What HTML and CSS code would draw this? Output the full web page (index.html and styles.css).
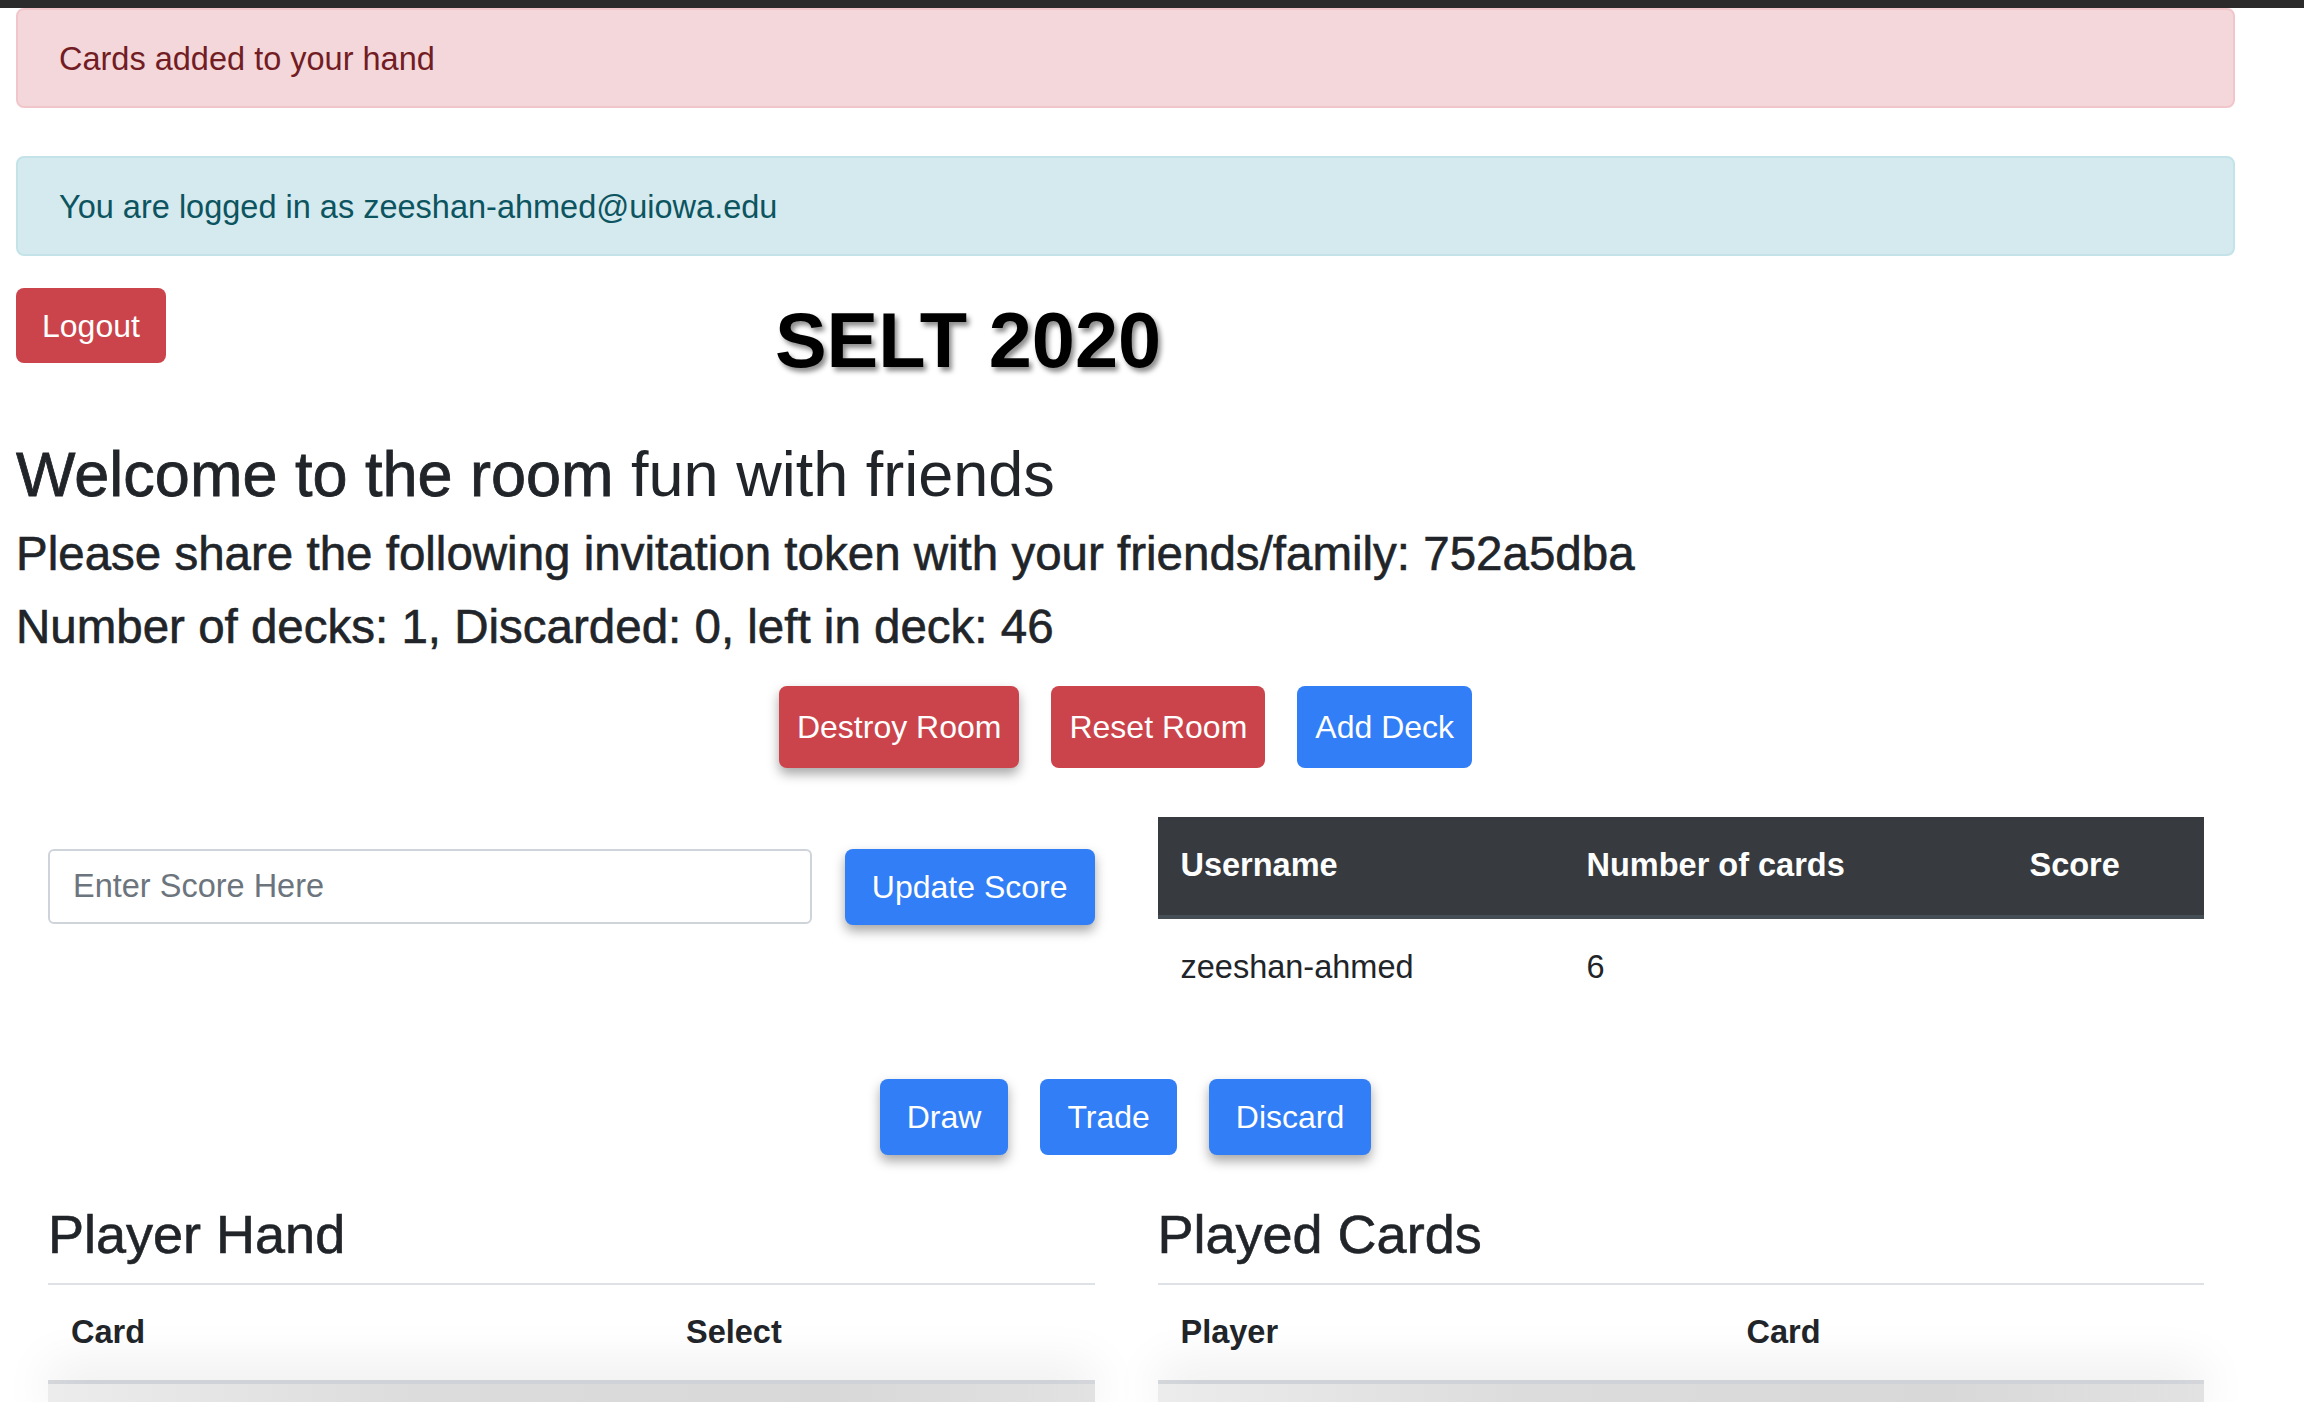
FILE: index.html
```html
<!DOCTYPE html>
<html lang="en">
<head>
<meta charset="utf-8">
<title>SELT 2020 - Room</title>
<link rel="stylesheet" href="styles.css">
</head>
<body>
<div class="topbar"></div>
<div class="page">
  <div class="alert alert-danger">Cards added to your hand</div>
  <div class="alert alert-info">You are logged in as zeeshan-ahmed@uiowa.edu</div>

  <header class="title-row">
    <a class="btn btn-danger btn-logout" href="#">Logout</a>
    <h1 class="site-title">SELT 2020</h1>
  </header>

  <h2 class="room-title"><span class="medium">Welcome to the room</span> fun with friends</h2>
  <h4 class="info-line">Please share the following invitation token with your friends/family: 752a5dba</h4>
  <h4 class="info-line">Number of decks: 1, Discarded: 0, left in deck: 46</h4>

  <div class="btn-row room-actions">
    <button class="btn btn-danger btn-room raised">Destroy Room</button>
    <button class="btn btn-danger btn-room">Reset Room</button>
    <button class="btn btn-primary btn-room">Add Deck</button>
  </div>

  <div class="two-col score-section">
    <div class="col">
      <form class="score-form">
        <input class="score-input" type="text" placeholder="Enter Score Here">
        <button class="btn btn-primary btn-game raised" type="button">Update Score</button>
      </form>
    </div>
    <div class="col">
      <table class="table table-dark players">
        <colgroup><col class="c-user"><col class="c-num"><col></colgroup>
        <thead>
          <tr><th>Username</th><th>Number of cards</th><th>Score</th></tr>
        </thead>
        <tbody>
          <tr><td>zeeshan-ahmed</td><td>6</td><td></td></tr>
        </tbody>
      </table>
    </div>
  </div>

  <div class="btn-row game-actions">
    <button class="btn btn-primary btn-game raised">Draw</button>
    <button class="btn btn-primary btn-game">Trade</button>
    <button class="btn btn-primary btn-game raised">Discard</button>
  </div>

  <div class="two-col cards-section">
    <div class="col">
      <h3 class="section-title">Player Hand</h3>
      <hr class="rule">
      <table class="table cards">
        <colgroup><col class="c-card"><col></colgroup>
        <thead><tr><th>Card</th><th>Select</th></tr></thead>
      </table>
      <div class="table-fade"></div>
    </div>
    <div class="col">
      <h3 class="section-title">Played Cards</h3>
      <hr class="rule">
      <table class="table cards">
        <colgroup><col class="c-player"><col></colgroup>
        <thead><tr><th>Player</th><th>Card</th></tr></thead>
      </table>
      <div class="table-fade"></div>
    </div>
  </div>
</div>
</body>
</html>
```

FILE: styles.css
```css
html {
  overflow: hidden;
}

body {
  margin: 0;
  font-family: "Liberation Sans", Arial, sans-serif;
  font-size: 32.5px;
  line-height: 1.5;
  color: #212529;
  background: #fff;
}

.topbar {
  height: 8px;
  background: #2b2b2b;
}

.page {
  width: 2219px;
  margin-left: 16px;
}

/* Alerts */
.alert {
  border: 2px solid transparent;
  border-radius: 8px;
  padding: 25px 41px 23px;
  line-height: 48px;
}

.alert-danger {
  background: #f4d7da;
  border-color: #f1c6cb;
  color: #721c24;
  margin-bottom: 48px;
}

.alert-info {
  background: #d4eaef;
  border-color: #c3e3e9;
  color: #0c5460;
  margin-bottom: 32px;
}

/* Buttons */
.btn {
  display: inline-flex;
  align-items: center;
  justify-content: center;
  box-sizing: border-box;
  font-family: inherit;
  font-size: 32px;
  line-height: 1;
  color: #fff;
  border: 0;
  border-radius: 8px;
  text-decoration: none;
  cursor: pointer;
}

.btn-danger {
  background: #cb444b;
}

.btn-primary {
  background: #317ef6;
}

.raised {
  box-shadow: 0 6px 12px rgba(0, 0, 0, 0.35);
}

.btn-logout {
  height: 75px;
  padding: 0 26px;
}

.btn-room {
  height: 82px;
  padding: 0 18px;
}

.btn-game {
  height: 76px;
  padding: 0 27px;
}

/* Title row */
.title-row {
  display: flex;
  align-items: flex-start;
  margin-bottom: 50px;
}

.site-title {
  margin: 6px 0 0 609px;
  font-size: 77.5px;
  font-weight: 700;
  line-height: 1.2;
  color: #000;
  text-shadow: 3px 4px 5px rgba(0, 0, 0, 0.45);
}

.room-title {
  margin: 0 0 12px;
  font-size: 63px;
  font-weight: 400;
  line-height: 1.2;
}

.room-title .medium {
  -webkit-text-stroke: 0.8px #212529;
}

.info-line {
  margin: 0 0 16px;
  font-size: 47.5px;
  font-weight: 400;
  line-height: 1.2;
  -webkit-text-stroke: 0.6px #212529;
}

.btn-row {
  display: flex;
  justify-content: center;
  gap: 32px;
}

.room-actions {
  margin-top: 31px;
  margin-bottom: 49px;
}

.game-actions {
  margin-top: 62px;
}

/* Two column layout */
.two-col {
  display: grid;
  grid-template-columns: 1fr 1fr;
}

.col {
  padding: 0 31px 0 32px;
  min-width: 0;
}

.score-form {
  display: flex;
  gap: 33px;
  margin: 32px 0 0;
}

.score-input {
  flex: 1;
  min-width: 0;
  height: 75px;
  box-sizing: border-box;
  border: 2px solid #ced4da;
  border-radius: 6px;
  padding: 0 23px;
  font-family: inherit;
  font-size: 32.5px;
  color: #495057;
  background: #fff;
}

.score-input::placeholder {
  color: #6c757d;
}

/* Tables */
.table {
  width: 100%;
  border-collapse: collapse;
  table-layout: fixed;
}

.table th,
.table td {
  text-align: left;
  padding: 24.5px 23px;
  line-height: 49px;
}

.table th {
  font-weight: 700;
}

.table-dark th {
  background: #373b40;
  color: #fff;
  border-bottom: 4px solid #454d55;
}

.c-user { width: 406px; }
.c-num { width: 443px; }
.c-card { width: 615px; }
.c-player { width: 566px; }

.cards-section {
  margin-top: 47px;
}

.section-title {
  margin: 0 0 17px;
  font-size: 54px;
  font-weight: 400;
  line-height: 1.2;
  -webkit-text-stroke: 0.6px #212529;
}

.rule {
  margin: 0;
  border: 0;
  border-top: 2px solid #dee2e6;
}

.cards th {
  padding: 23px 23px;
  border-bottom: 4px solid #d9dce0;
}

.table-fade {
  height: 40px;
  background: linear-gradient(90deg, #ececec 0%, #dcdcdc 35%, #d8d8d8 75%, #e2e2e2 100%);
  box-shadow: 0 -18px 50px rgba(0, 0, 0, 0.08);
}
```
